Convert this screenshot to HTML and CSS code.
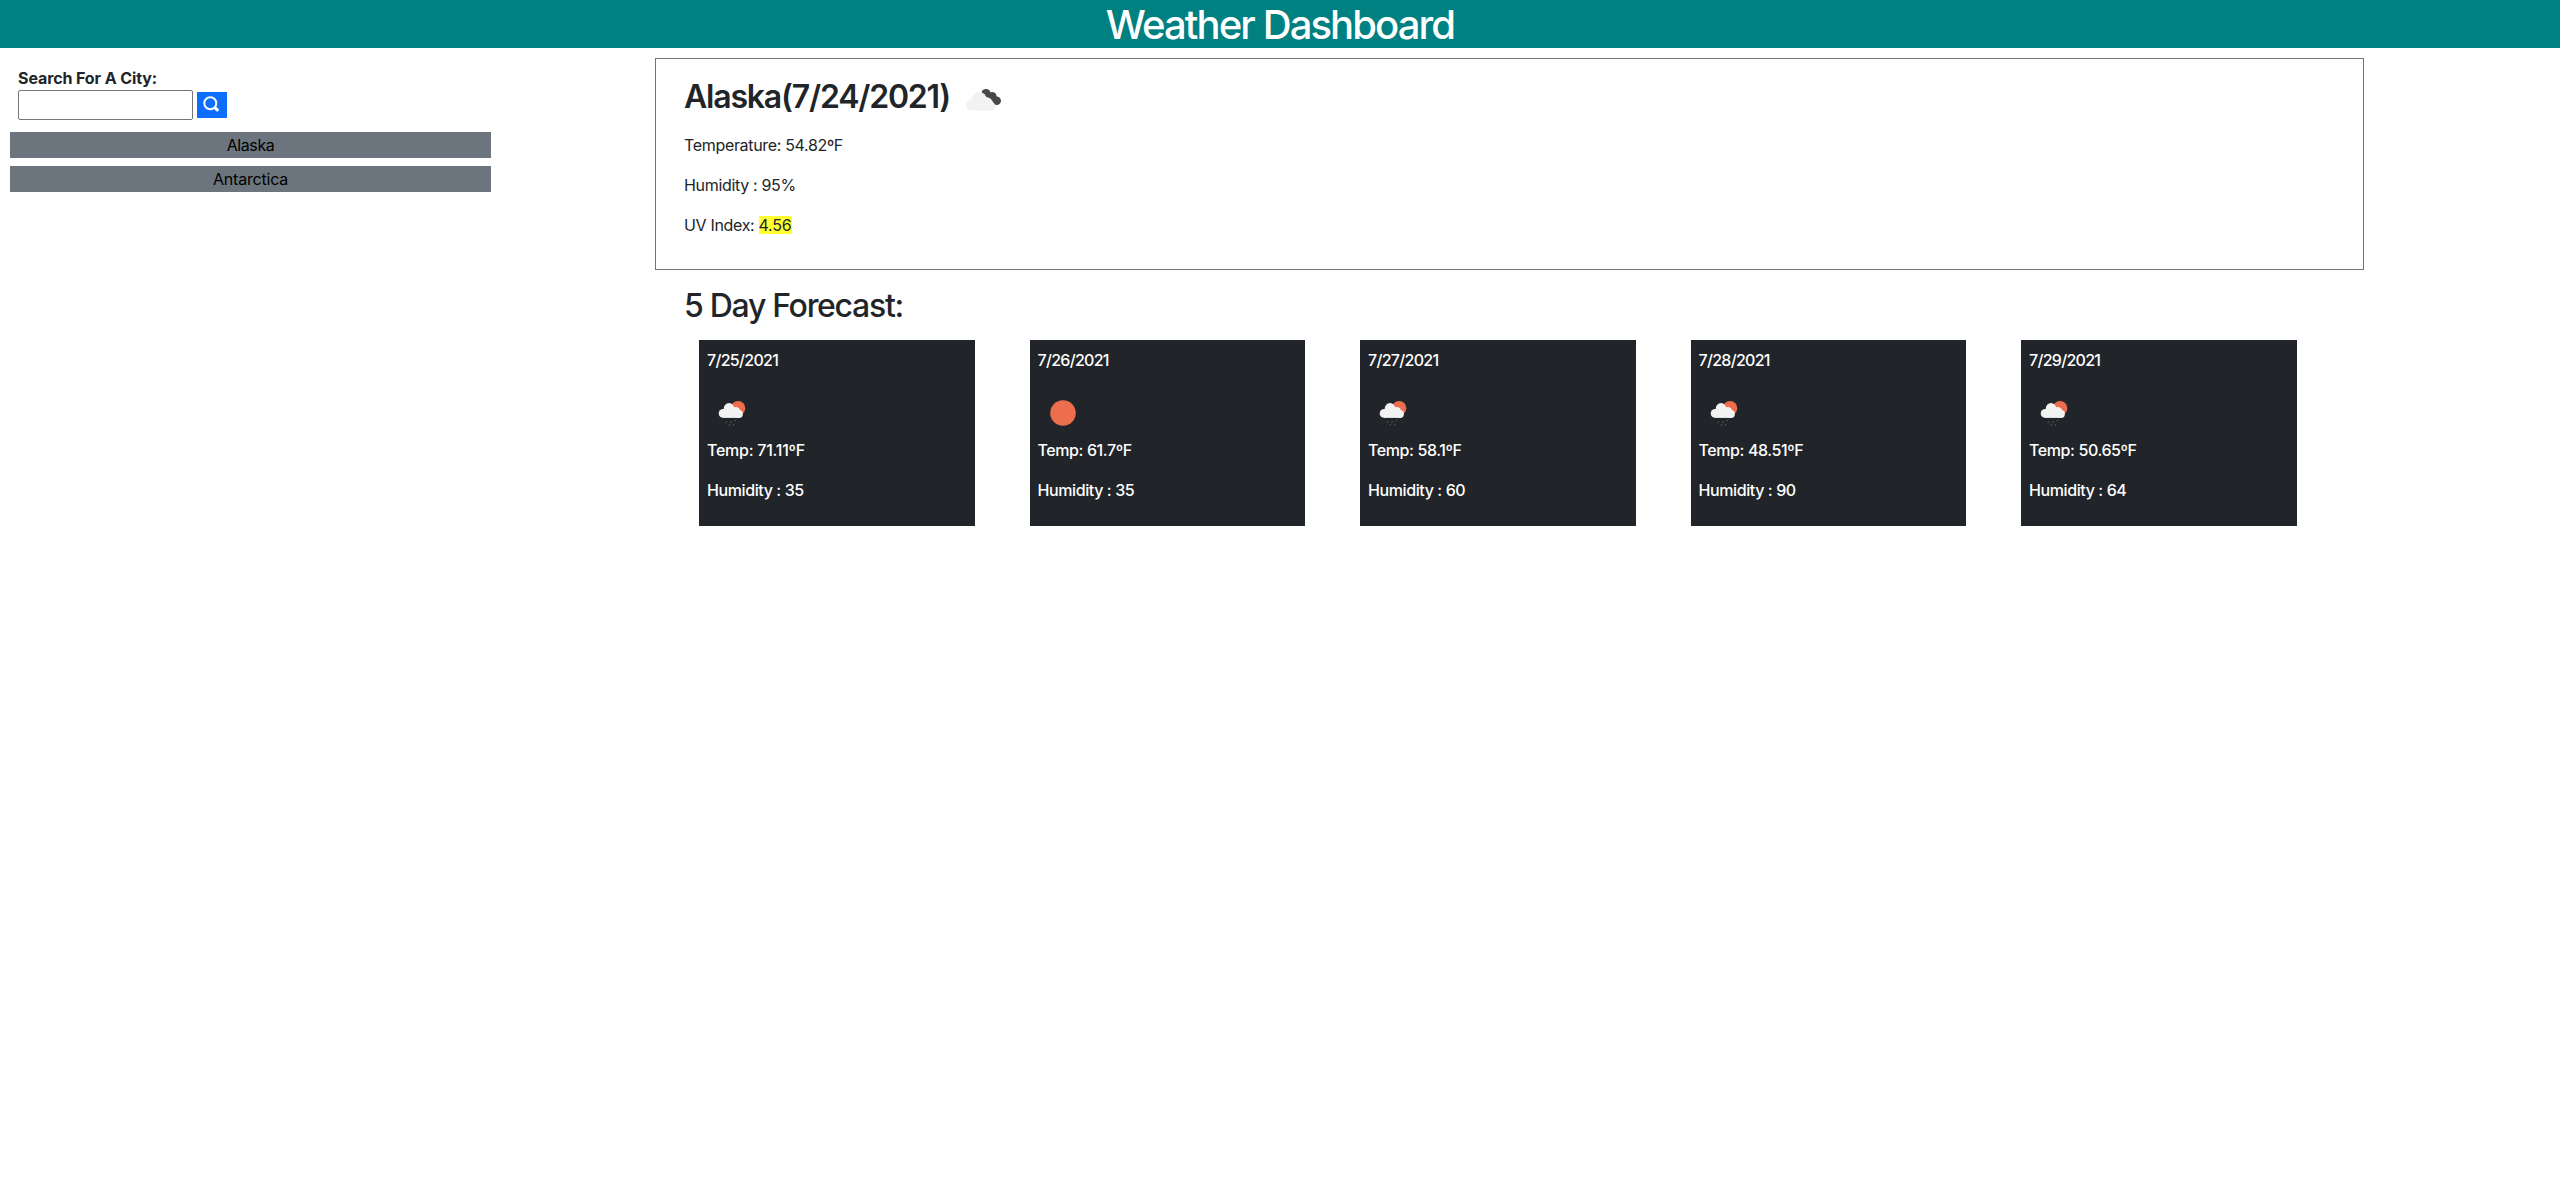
FILE: index.html
```html
<!DOCTYPE html>
<html lang="en">
<head>
<meta charset="utf-8">
<title>Weather Dashboard</title>
<link rel="stylesheet" href="styles.css">
</head>
<body>
<svg class="defs" width="0" height="0">
  <symbol id="rain" viewBox="0 0 50 50">
    <circle cx="31.1" cy="20.2" r="7.200" fill="#ec6e4c"/>
    <g fill="#f2f2f2"><circle cx="16.100" cy="25.400" r="4.400"/><circle cx="22" cy="20.400" r="5.300"/><circle cx="28.500" cy="24" r="5"/><circle cx="32" cy="26" r="3.900"/><rect x="16" y="21" width="16" height="8.900"/></g>
    <g stroke="#5b5c5e" stroke-width="1" stroke-linecap="round">
      <path d="M19 34.800l.8-1.200M23.500 34.800l.8-1.200M28.200 32.800l.5-.8M22 37.300l.7-1M26.200 37.300l.7-1.100"/>
    </g>
  </symbol>
  <symbol id="sun" viewBox="0 0 50 50">
    <circle cx="25" cy="25" r="12.800" fill="#ec6e4c"/>
  </symbol>
  <symbol id="clouds" viewBox="0 0 50 50">
    <g fill="#484848"><circle cx="27" cy="18.500" r="4.600"/><circle cx="33" cy="21.500" r="4.600"/><circle cx="37.700" cy="25.800" r="4.300"/></g>
    <g fill="#fff"><circle cx="20" cy="24.500" r="7.600"/><circle cx="27.500" cy="28.500" r="6.200"/></g>
    <g fill="#f2f2f2"><circle cx="12.700" cy="30" r="5.600"/><circle cx="20" cy="24.300" r="7"/><circle cx="26.500" cy="28" r="5.500"/><circle cx="31.500" cy="31" r="4.600"/><rect x="12.700" y="26" width="18.800" height="9.600"/></g>
  </symbol>
</svg>
<header class="banner"><h1>Weather Dashboard</h1></header>
<main class="layout">
  <aside class="sidebar">
    <form class="search">
      <label for="city">Search For A City:</label>
      <div class="search-row">
        <input id="city" type="text">
        <button type="button" class="search-btn" aria-label="Search">
          <svg width="18" height="18" viewBox="0 0 18 18" fill="none" stroke="#fff" stroke-linecap="round"><circle cx="7.300" cy="8.200" r="6" stroke-width="2"/><path d="M12.600 13.300l1.700 1.600" stroke-width="3.200"/></svg>
        </button>
      </div>
    </form>
    <ul class="history">
      <li class="alaska">Alaska</li>
      <li>Antarctica</li>
    </ul>
  </aside>
  <section class="content">
    <article class="current">
      <h2><span>Alaska(7/24/2021)</span><svg class="icon"><use href="#clouds"/></svg></h2>
      <p>Temperature: 54.82ºF</p>
      <p>Humidity : 95%</p>
      <p>UV Index: <span class="uv">4.56</span></p>
    </article>
    <h2 class="forecast-title">5 Day Forecast:</h2>
    <div class="forecast">
      <article class="card"><p class="date">7/25/2021</p><svg class="icon"><use href="#rain"/></svg><p class="ones">Temp: 71.11ºF</p><p>Humidity : 35</p></article>
      <article class="card"><p class="date">7/26/2021</p><svg class="icon"><use href="#sun"/></svg><p>Temp: 61.7ºF</p><p>Humidity : 35</p></article>
      <article class="card"><p class="date">7/27/2021</p><svg class="icon"><use href="#rain"/></svg><p>Temp: 58.1ºF</p><p>Humidity : 60</p></article>
      <article class="card"><p class="date">7/28/2021</p><svg class="icon"><use href="#rain"/></svg><p>Temp: 48.51ºF</p><p>Humidity : 90</p></article>
      <article class="card"><p class="date">7/29/2021</p><svg class="icon"><use href="#rain"/></svg><p>Temp: 50.65ºF</p><p>Humidity : 64</p></article>
    </div>
  </section>
</main>
</body>
</html>
```
FILE: styles.css
```css
* { box-sizing: border-box; }
body {
  margin: 0;
  background: #fff;
  color: #212529;
  font: 400 16px/24px Inter, "Liberation Sans", sans-serif;
  letter-spacing: -.33px;
}
h1, h2, p, ul { margin: 0; padding: 0; }
.defs { display: block; }
.banner { height: 48px; background: #008080; color: #fff; text-align: center; }
h1 { font-size: 40px; font-weight: 550; line-height: 49px; letter-spacing: -1.9px; }
.layout { display: flex; }
.sidebar { width: 481px; margin: 18px 164px 0 10px; }
.search { padding: 0 8px; }
.search label { display: block; font-weight: 700; letter-spacing: -.1px; }
.search-row { display: flex; align-items: center; gap: 4px; }
.search input { width: 175px; height: 30px; border: 1px solid #767676; border-radius: 2px; background: #fff; }
.search-btn { display: flex; align-items: flex-start; width: 30px; height: 26px; padding: 3px 0 0 6px; border: 0; background: #0d6efd; }
.history { display: grid; gap: 8px; margin-top: 12px; list-style: none; text-align: center; color: #000; }
.history li { height: 26px; background: #6c757d; line-height: 26px; letter-spacing: -.2px; }
.history .alaska { letter-spacing: -.4px; }
.content { width: 1709px; margin-top: 10px; }
.current { height: 212px; padding: 16px 28px; border: 1px solid #6c757d; }
.current h2 { display: flex; gap: 9px; height: 50px; margin-bottom: 8px; font-size: 32px; font-weight: 600; line-height: 43px; letter-spacing: -1.2px; }
.icon { display: block; width: 50px; height: 50px; }
.current p, .card p { margin-bottom: 16px; }
.uv { display: inline-block; height: 18px; background: #ffff32; line-height: 18px; letter-spacing: -.2px; }
.forecast-title { margin: 17px 29px 15px; font-size: 32px; font-weight: 550; line-height: 38px; letter-spacing: -1.3px; }
.forecast { display: grid; grid-template-columns: repeat(5, 275.5px); column-gap: 55px; margin-left: 44px; }
.card { height: 186px; padding: 8px; background: #212529; color: #fff; font-weight: 500; letter-spacing: -.4px; }
.date { letter-spacing: -.7px; }
.card .ones { letter-spacing: -.25px; }
```
